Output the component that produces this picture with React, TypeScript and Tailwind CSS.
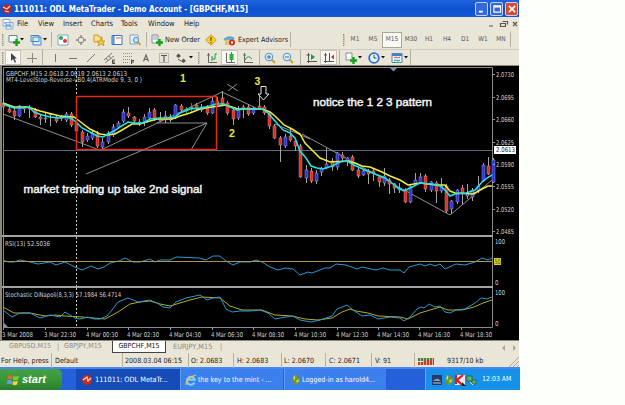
import type { ReactNode } from "react";
import clsx from "clsx";

type Candle = [color: "r" | "b" | "g", high: number, top: number, bottom: number, low: number];

const candles: Candle[] = [
  ["r", 98, 103, 107, 110], ["r", 107, 109, 112, 113], ["r", 108, 111, 116, 120], ["b", 105, 106, 116, 117],
  ["b", 106, 107, 109, 113], ["r", 105, 107, 109, 118], ["r", 108, 110, 117, 118], ["r", 114, 117, 119, 125],
  ["b", 112, 118, 119, 123], ["b", 113, 114, 115, 126], ["r", 115, 118, 121, 123], ["b", 115, 116, 118, 121],
  ["b", 112, 114, 120, 122], ["r", 112, 114, 125, 127], ["r", 121, 123, 131, 134], ["r", 130, 132, 142, 147],
  ["b", 133, 136, 140, 142], ["b", 130, 133, 138, 140], ["r", 131, 134, 146, 148], ["b", 138, 142, 147, 149],
  ["b", 131, 133, 142, 144], ["b", 124, 127, 134, 137], ["b", 121, 123, 127, 129], ["b", 109, 112, 121, 123],
  ["r", 107, 113, 116, 118], ["r", 116, 117, 121, 123], ["r", 119, 122, 124, 126], ["b", 114, 117, 122, 126],
  ["b", 108, 112, 118, 120], ["r", 108, 110, 119, 121], ["r", 112, 118, 121, 122], ["r", 111, 116, 120, 123],
  ["r", 114, 117, 120, 122], ["b", 104, 105, 118, 119], ["r", 104, 106, 110, 111], ["g", 107, 109, 110, 113],
  ["g", 103, 107, 108, 112], ["r", 103, 105, 109, 110], ["b", 104, 107, 110, 112], ["r", 105, 107, 113, 115],
  ["b", 96, 101, 113, 114], ["r", 97, 101, 103, 105], ["r", 91, 98, 104, 106], ["r", 101, 103, 113, 115],
  ["r", 107, 110, 119, 125], ["b", 106, 110, 118, 120], ["r", 105, 107, 109, 118], ["r", 104, 107, 114, 116],
  ["b", 107, 108, 113, 115], ["r", 96, 106, 109, 110], ["r", 105, 107, 113, 115], ["r", 112, 114, 126, 129],
  ["r", 124, 126, 138, 139], ["r", 136, 138, 145, 162], ["b", 134, 137, 146, 148], ["r", 128, 136, 140, 142],
  ["r", 138, 141, 146, 151], ["r", 144, 146, 177, 178], ["b", 165, 170, 178, 183], ["r", 168, 171, 181, 183],
  ["b", 170, 173, 181, 184], ["b", 167, 168, 172, 176], ["b", 148, 164, 168, 169], ["r", 158, 161, 167, 171],
  ["b", 152, 153, 167, 170], ["r", 152, 155, 158, 161], ["b", 157, 158, 161, 166], ["r", 155, 157, 170, 171],
  ["r", 168, 170, 176, 178], ["b", 169, 171, 175, 176], ["r", 169, 171, 174, 184], ["r", 169, 171, 173, 181],
  ["r", 175, 177, 182, 187], ["b", 168, 176, 183, 186], ["r", 178, 180, 184, 194], ["r", 183, 184, 188, 193],
  ["b", 183, 188, 190, 193], ["r", 188, 190, 202, 203], ["b", 185, 186, 202, 203], ["b", 173, 180, 184, 186],
  ["b", 173, 177, 183, 184], ["r", 174, 176, 189, 192], ["b", 181, 182, 190, 192], ["r", 181, 183, 191, 203],
  ["b", 178, 186, 191, 193], ["r", 184, 186, 211, 213], ["b", 200, 201, 209, 214], ["b", 189, 190, 202, 204],
  ["r", 185, 188, 193, 205], ["b", 184, 193, 196, 199], ["b", 188, 190, 197, 201], ["b", 176, 186, 191, 193],
  ["b", 163, 165, 181, 182], ["r", 157, 166, 174, 175], ["b", 158, 160, 182, 183],
];

const candleFill = { r: "#e8281c", b: "#2a30e8", g: "#18a030" };

const fastLine =
  "3,104 8,106 14,108 22,108 29,107 34,112 42,115 50,117 60,118 67,117 72,119 76,122 82,128 90,132 97,136 103,137 108,134 114,131 120,127 128,122 135,123 143,123 150,119 160,118 168,118 175,117 180,113 190,109 200,108 210,106 216,104 224,104 230,107 237,110 245,109 262,109 268,113 275,121 283,130 290,133 295,138 300,151 306,158 311,166 317,168 323,169 332,166 340,162 347,161 354,165 365,170 375,174 385,178 392,183 398,188 404,191 410,188 420,183 432,184 440,186 445,190 450,196 455,194 466,193 475,190 482,182 487,178 492,175";
const slowLine =
  "3,103 14,107 28,107 40,111 52,114 60,116 74,117 82,123 90,129 100,134 108,135 115,134 122,130 132,124 140,124 150,121 157,119 172,119 180,116 190,113 200,109 212,107 226,105 238,109 262,109 270,112 276,117 284,125 292,129 300,134 305,143 313,151 320,158 330,162 348,161 355,163 362,166 370,167 382,172 390,176 400,180 408,185 420,183 436,185 445,185 450,191 455,193 473,194 482,189 488,186 492,186";
const rsiLine =
  "3,260 8,262 14,262 20,260 30,262 38,264 50,262 56,265 65,262 75,267 82,270 91,266 98,269 104,267 110,263 119,261 125,258 133,262 140,262 150,259 155,262 160,260 170,260 176,257 200,258 206,260 213,256 220,256 226,261 233,265 240,262 250,262 256,260 262,262 270,267 278,270 285,268 293,269 300,275 308,272 312,273 325,268 330,268 336,264 346,265 357,269 362,267 376,270 383,268 390,270 400,270 404,273 409,267 420,264 425,266 430,264 435,266 440,264 445,269 456,264 465,265 475,262 482,258 488,260 492,258";
const stochMain =
  "3,310 12,317 20,313 30,313 40,318 50,315 60,317 65,312 75,318 80,319 88,317 94,319 100,319 107,316 112,310 118,302 128,298 138,302 150,300 157,303 163,307 170,308 176,302 186,298 200,295 207,300 213,298 220,297 226,309 232,312 240,311 250,311 260,310 268,313 275,319 285,317 293,316 300,320 311,322 320,320 332,316 337,309 347,305 353,310 362,316 370,315 378,319 390,317 400,318 404,321 410,317 417,309 421,307 424,308 429,304 435,307 440,306 445,312 450,313 456,310 465,309 475,303 481,298 487,299 492,297";
const stochSignal =
  "3,307 14,313 30,313 45,316 55,315 65,316 82,317 105,319 118,312 130,304 140,302 150,301 160,304 170,306 180,303 190,300 202,297 220,298 230,306 242,310 262,310 275,315 292,316 305,319 318,320 332,318 342,312 350,309 356,311 368,313 378,316 400,317 408,319 420,313 430,310 440,307 448,310 462,310 474,307 483,303 492,300";

const prices: [string, number][] = [
  ["2.0730", 77], ["2.0695", 100], ["2.0660", 122], ["2.0625", 145],
  ["2.0590", 167], ["2.0555", 189], ["2.0520", 212], ["2.0485", 234],
];

const times: [string, number, number][] = [
  ["3 Mar 2008", 2, 31], ["3 Mar 22:30", 44, 32], ["4 Mar 00:30", 86, 32], ["4 Mar 02:30", 127, 32],
  ["4 Mar 04:30", 169, 32], ["4 Mar 06:30", 211, 32], ["4 Mar 08:30", 252, 32], ["4 Mar 10:30", 294, 32],
  ["4 Mar 12:30", 336, 32], ["4 Mar 14:30", 377, 32], ["4 Mar 16:30", 418, 32], ["4 Mar 18:30", 460, 32],
];

// one chart pane, drawn in window coordinates
function Pane({ top, height, children }: { top: number; height: number; children: ReactNode }) {
  return (
    <svg
      width={517}
      height={height}
      viewBox={`2 ${top} 517 ${height}`}
      className="block shrink-0 font-['DejaVu_Sans_Condensed','DejaVu_Sans',sans-serif]"
    >
      {children}
    </svg>
  );
}

function Label({ x, y, w, children, fill = "#d4d4d4" }: { x: number; y: number; w: number; children: string; fill?: string }) {
  return (
    <text x={x} y={y} textLength={w} lengthAdjust="spacingAndGlyphs" fontSize={6.6} fill={fill}>
      {children}
    </text>
  );
}

function Note({ x, y, w, children }: { x: number; y: number; w: number; children: string }) {
  return (
    <text
      x={x} y={y} textLength={w} fontSize={11.5} fill="#f4f4f4" stroke="#f4f4f4" strokeWidth={0.45}
      lengthAdjust="spacingAndGlyphs" className="font-['Liberation_Sans',Arial,sans-serif]"
    >
      {children}
    </text>
  );
}

function PricePane() {
  return (
    <Pane top={66} height={169}>
      <path d="M3.5 235V67.5H492.5V235" fill="none" stroke="#8a8a8a" />
      <path d="M3 150.5H492" stroke="#566c84" />
      <path d="M76.5 68V235" stroke="#c8c8b8" strokeDasharray="2 2" />
      <path
        d="M3 114L97 149M103 149L222 92L258 109M275 124L310 139M302 134L417 197L450 215L492 180M86 174L207 123L191 150M157 123H207M227 84L238 91M228 91L237 84"
        stroke="#b4b0b0" strokeWidth={0.8} fill="none"
      />
      {candles.map(([color, high, top, bottom, low], i) => {
        const x = Math.round(3.4 + i * 5.21);
        return (
          <g key={i}>
            <path d={`M${x + 0.5} ${high}V${low}`} stroke={color === "g" ? "#18a030" : "#a8a4a4"} />
            <rect
              x={x - 1} y={top} width={3} height={Math.max(1, bottom - top)}
              fill={candleFill[color]} stroke="#b8a8b0" strokeWidth={0.45}
            />
          </g>
        );
      })}
      <polyline points={slowLine} fill="none" stroke="#f0ee38" strokeWidth={1.5} />
      <polyline points={fastLine} fill="none" stroke="#20e4e8" strokeWidth={1.5} />
      <rect x={76.5} y={96.5} width={140} height={53} fill="none" stroke="#e42a18" strokeWidth={1.5} />
      <path d="M261 86.5H266V94H269L263.5 100L258 94H261Z" fill="#000" stroke="#e8e8e8" />
      <path d="M390 68H397L393.5 71.5Z" fill="#7890a8" />
      <g fontSize={10.5} fontWeight={700} fill="#ece83c" className="font-['Liberation_Sans',Arial,sans-serif]">
        <text x={180} y={82}>1</text>
        <text x={229} y={137}>2</text>
        <text x={254.5} y={85}>3</text>
      </g>
      <Note x={313} y={105.5} w={119}>notice the 1 2 3 pattern</Note>
      <Note x={23.5} y={193} w={178.5}>market trending up take 2nd signal</Note>
      <Label x={6} y={75.5} w={121}>GBPCHF,M15  2.0618 2.0619 2.0613 2.0613</Label>
      <Label x={6} y={82} w={136}>MT4-LevelStop-Reverse-vB0.4(ATRMode 9, 3, 0 )</Label>
      {prices.map(([p, y]) => (
        <g key={p}>
          <path d={`M493 ${y - 2.5}H495`} stroke="#999" />
          <Label x={496} y={y} w={18}>{p}</Label>
        </g>
      ))}
      <rect x={494} y={146} width={22} height={8} fill="#fff" />
      <Label x={496} y={152.4} w={19} fill="#222">2.0613</Label>
    </Pane>
  );
}

function RsiPane() {
  return (
    <Pane top={237} height={49}>
      <path d="M3.5 237V286M492.5 237V286" stroke="#8a8a8a" />
      <path d="M76.5 237V286" stroke="#c8c8b8" strokeDasharray="2 2" />
      <polyline points={rsiLine} fill="none" stroke="#249cd0" />
      <path d="M4 261.5H492" stroke="#a89450" />
      <Label x={5} y={245.5} w={45}>RSI(13) 52.5036</Label>
      <Label x={495} y={243.5} w={10}>100</Label>
      <Label x={495} y={285} w={3.5}>0</Label>
      <rect x={494} y={258} width={7} height={7} fill="#d8d420" />
      <Label x={494.5} y={264} w={6} fill="#555010">50</Label>
    </Pane>
  );
}

function StochasticPane() {
  return (
    <Pane top={288} height={51}>
      <path d="M3.5 288V327.5H492.5V288" fill="none" stroke="#8a8a8a" />
      <path d="M76.5 288V327" stroke="#c8c8b8" strokeDasharray="2 2" />
      <polyline points={stochSignal} fill="none" stroke="#b4ac24" />
      <polyline points={stochMain} fill="none" stroke="#249cd0" />
      <path d="M4 323V327H8Z" fill="#8098b8" />
      <Label x={5} y={297} w={116}>Stochastic DiNapoli(8,3,3) 57.1984 56.4714</Label>
      <Label x={495} y={295} w={10}>100</Label>
      <Label x={495} y={326} w={3.5}>0</Label>
      {times.map(([t, x, w]) => (
        <g key={t}>
          <path d={`M${x + 1.5} 327V330`} stroke="#999" />
          <Label x={x} y={336.5} w={w}>{t}</Label>
        </g>
      ))}
    </Pane>
  );
}

function Icon({ children, className = "w-3" }: { children: ReactNode; className?: string }) {
  return (
    <span className={clsx("flex h-full shrink-0 items-center justify-center", className)}>
      <svg width={12} height={12} viewBox="0 0 12 12" fill="none" className="shrink-0">
        {children}
      </svg>
    </span>
  );
}

function Caret() {
  return (
    <svg width={4} height={3} viewBox="0 0 4 3" className="shrink-0">
      <path d="M0 0H4L2 2.5Z" fill="#111" />
    </svg>
  );
}

const Divider = () => <span className="h-[15px] w-px shrink-0 bg-[#b4b1a3]" />;
const Grip = () => <span className="h-3 w-[2px] shrink-0 border-l border-dotted border-[#99958a] bg-[#d0ccbd]" />;

const plus = <path d="M8.5 5V12M5 8.5H12" stroke="#16a020" strokeWidth={2.4} />;

function TitleBar() {
  return (
    <div className="flex h-[17px] w-[519px] shrink-0 items-center bg-gradient-to-b from-[#2164df] via-[#0c52cf] to-[#1458d8] pl-[1px] pr-[1px]">
      <Icon>
        <circle cx="6" cy="6" r="4.8" fill="#ad2920" />
        <path d="M2 4L6 6L9 3M4 8L8 9" stroke="#ffd4c6" strokeWidth="1.2" />
      </Icon>
      <svg width={400} height={17} className="ml-[1px] shrink-0 font-['DejaVu_Sans_Condensed','DejaVu_Sans',sans-serif]">
        <text x={0} y={12.3} textLength={234} lengthAdjust="spacingAndGlyphs" fontSize={8.6} fontWeight={700} fill="#fff">
          111011: ODL MetaTrader - Demo Account - [GBPCHF,M15]
        </text>
      </svg>
      <div className="ml-auto flex gap-[2px]">
        <WindowButton className="bg-[#3468dc]"><path d="M3 9H7" strokeWidth={2} /></WindowButton>
        <WindowButton className="bg-[#3468dc]"><path d="M3 3H10V9.5H3ZM3 4H10" /></WindowButton>
        <WindowButton className="bg-[#dc4830]"><path d="M3 3L9.5 9.5M9.5 3L3 9.5" strokeWidth={1.7} /></WindowButton>
      </div>
    </div>
  );
}

function WindowButton({ className, children }: { className: string; children: ReactNode }) {
  return (
    <span className={clsx("flex h-[14px] w-[13px] items-center justify-center rounded-[2px] border border-[#c4d4f4]", className)}>
      <svg width={12} height={12} viewBox="0 0 12.5 12.5" fill="none" stroke="#fff" strokeWidth={1.2} className="shrink-0">
        {children}
      </svg>
    </span>
  );
}

function MenuBar() {
  return (
    <div className="flex h-[13px] shrink-0 items-center pl-[2px] text-[7.5px] text-[#222]">
      <Icon className="w-[15px] pr-[3px]">
        <path d="M1 1.5H8V8H1ZM4 4.5H11V11H4Z" fill="#f4faff" stroke="#84a8d8" />
        <path d="M3 4V6M5 6V9M7 6V9M9 7V10" stroke="#5888c8" />
      </Icon>
      <span className="w-[21px]">File</span>
      <span className="w-[25px]">View</span>
      <span className="w-[28px]">Insert</span>
      <span className="w-[30px]">Charts</span>
      <span className="w-[27px]">Tools</span>
      <span className="w-[36px]">Window</span>
      <span>Help</span>
      <svg width={32} height={11} viewBox="0 0 32 11" fill="none" stroke="#555" className="ml-auto">
        <path d="M2 8H6M15.5 3.5H20.5V6.5M13.5 5.5H18.5V8.5H13.5ZM26 4L30 8M30 4L26 8" strokeWidth={1.2} />
      </svg>
    </div>
  );
}

const periods = ["M1", "M5", "M15", "M30", "H1", "H4", "D1", "W1", "MN"];

function StandardToolbar() {
  return (
    <div className="flex h-[19px] shrink-0 items-center pl-[2px] text-[7.5px] text-[#222]">
      <Grip />
      <Icon className="ml-[3px] w-[13px]">
        <path d="M1 1.5H9V8H1Z" fill="#f4fff4" stroke="#6484a0" />{plus}
      </Icon>
      <Caret />
      <Icon className="ml-[6px] w-[12px]">
        <path d="M3 3H11V11H3ZM1 1.5H9V7.5H1Z" fill="#d8ecfc" stroke="#4886c8" />
      </Icon>
      <span className="ml-[1px] flex w-[8px]"><Caret /></span>
      <Divider />
      <Icon className="ml-[5px]">
        <path d="M1 1H11V11H1Z" fill="#fff" stroke="#80a4c8" />
        <circle cx="4" cy="4" r="2" fill="#20ac40" /><circle cx="8" cy="7" r="2" fill="#e03828" />
      </Icon>
      <Icon className="ml-[6px]">
        <circle cx="6" cy="6" r="3" stroke="#888" />
        <path d="M6 1V4M6 8V11M1 6H4M8 6H11" stroke="#888" strokeWidth={1.4} />
      </Icon>
      <Icon className="ml-[6px]">
        <path d="M1 1H5L6 3H9V8H1Z" fill="#ffe488" stroke="#c89430" />
        <path d="M8 4L9 7L12 7L10 9L11 12L8 10L5 12L6 9L4 7L7 7Z" fill="#f8c438" stroke="#b48418" strokeWidth={0.6} />
      </Icon>
      <Icon className="ml-[6px]">
        <path d="M1 1.5H11V10.5H1Z" fill="#fff" stroke="#3078c4" />
        <path d="M2 2V10M3 2V10" stroke="#3078c4" /><path d="M5 4H10" stroke="#e05838" />
      </Icon>
      <Icon className="ml-[6px]">
        <path d="M1 1H9V10H1Z" fill="#e4f0fc" stroke="#80a4c8" />
        <circle cx="7" cy="6" r="2.6" fill="#c8e4fc" stroke="#6488ac" /><path d="M9 8L11.5 11" stroke="#d09820" strokeWidth={1.8} />
      </Icon>
      <span className="w-[5px]" />
      <Divider />
      <Icon className="ml-[4px]">
        <path d="M1 1H7V9H1Z" fill="#fff" stroke="#7c8c98" /><path d="M2 3H6M2 5H6" stroke="#8ca0b0" />{plus}
      </Icon>
      <span className="ml-[2px] w-[40px] whitespace-nowrap text-[7.3px]">New Order</span>
      <Icon>
        <path d="M6 .7L11.3 6L6 11.3L.7 6Z" fill="#f8d02c" stroke="#c89820" />
        <path d="M6 3V7M6 8V9.2" stroke="#7c5400" strokeWidth={1.3} />
      </Icon>
      <Icon className="ml-[5px] w-[13px]">
        <path d="M1 5Q6 1 11 4L9 8H3Z" fill="#60b0d8" stroke="#4488a8" strokeWidth={0.6} />
        <path d="M2 6H8V11H2Z" fill="#e8c468" /><circle cx="9" cy="8.5" r="3" fill="#d82c20" /><path d="M8 7.5H10V9.5H8Z" fill="#fff" />
      </Icon>
      <span className="ml-[3px] w-[52px] whitespace-nowrap text-[7.1px]">Expert Advisors</span>
      <Divider />
      <span className="w-[52px]" />
      <Grip />
      <div className="ml-[1px] flex h-[17px] w-[164px] items-center text-[6.5px] text-[#555]">
        {periods.map((p) => (
          <span
            key={p}
            className={clsx(
              "flex h-[16px] flex-1 items-center justify-center",
              p === "M15" && "border border-[#aaa79a] bg-[#faf9f4]",
            )}
          >
            {p}
          </span>
        ))}
      </div>
      <Divider />
    </div>
  );
}

function LineToolbar() {
  return (
    <div className="flex h-[16px] shrink-0 items-center border-t border-[#d0ccbd] pl-[2px]">
      <Grip />
      <Icon className="ml-[1px] w-[16px] border border-[#c8c5b8] bg-[#faf9f4]">
        <path d="M4 1V9L6 7L8 11L9 10L7.5 6.5H10Z" fill="#444" />
      </Icon>
      <Icon className="w-[21px]"><path d="M6.5 1V11M1 6.5H11" stroke="#888" /></Icon>
      <Divider />
      <Icon className="ml-[3px] w-[18px]"><path d="M6.5 2V10" stroke="#777" /></Icon>
      <Icon className="w-[18px]"><path d="M2 6.5H10" stroke="#777" /></Icon>
      <Icon className="w-[18px]"><path d="M2 10L10 2" stroke="#777" /></Icon>
      <Icon className="w-[18px]">
        <path d="M1 8L9 1M2 11L11 4M3 6L5 9M6 4L8 7" stroke="#777" /><path d="M12 8H9.5V11.5H12M9.5 10H12" stroke="#444" />
      </Icon>
      <Icon className="w-[19px]">
        <path d="M1 1.5H11M1 4.5H11M1 7.5H11M1 10.5H7" stroke="#888" strokeDasharray="1 1" /><path d="M9.5 12V8.5H12M9.5 10H12" stroke="#444" />
      </Icon>
      <Icon className="w-[18px]"><path d="M3.5 9.5L6 3L8.5 9.5M4.5 7.5H7.5" stroke="#666" strokeWidth={1.2} /></Icon>
      <Icon className="w-[18px]">
        <path d="M1.5 1.5H10.5V10.5H1.5Z" stroke="#888" strokeDasharray="1 1" /><path d="M3 3.5H9M6 3.5V10" stroke="#555" strokeWidth={1.2} />
      </Icon>
      <Icon className="w-[16px]">
        <path d="M1 4L3.5 1.5L6 4L3.5 6ZM6 9L8.5 6.5L11 9L8.5 11Z" fill="#555" /><path d="M3 7L6 9" stroke="#555" />
      </Icon>
      <span className="flex w-[9px]"><Caret /></span>
      <Grip />
      <Icon className="ml-[2px] w-[19px]">
        <path d="M2.5 1V10.5H11M1 3H4" stroke="#666" /><path d="M6 4V9M6 7H9V2H11" stroke="#18a030" />
      </Icon>
      <Icon className="w-[17px] border border-[#c8c5b8] bg-[#faf9f4]">
        <path d="M2.5 1V10.5H11" stroke="#666" /><path d="M7.5 0V10" stroke="#18a030" /><path d="M5.5 2H9.5V8H5.5Z" fill="#20b438" />
      </Icon>
      <Icon className="w-[19px]">
        <path d="M2.5 1V10.5H11M1 3H4" stroke="#666" /><path d="M3 8Q6 2 10 7" stroke="#18a030" />
      </Icon>
      <span className="w-[2px]" />
      <Divider />
      <Icon className="w-[19px]">
        <path d="M7 7L11 11" stroke="#cca030" strokeWidth={2} /><circle cx="5" cy="5" r="3.8" fill="#dceefc" stroke="#4c90cc" /><path d="M3 5H7M5 3V7" stroke="#286cac" />
      </Icon>
      <Icon className="w-[18px]">
        <path d="M7 7L11 11" stroke="#cca030" strokeWidth={2} /><circle cx="5" cy="5" r="3.8" fill="#dceefc" stroke="#4c90cc" /><path d="M3 5H7" stroke="#286cac" />
      </Icon>
      <span className="w-[3px]" />
      <Divider />
      <Icon className="ml-[1px] w-[18px]">
        <path d="M3.5 1V11M1.5 3H5M2 9.5H12" stroke="#555" /><path d="M6 2L10 5L6 8Z" fill="#18a030" />
      </Icon>
      <Icon className="w-[17px] border border-[#c8c5b8] bg-[#faf9f4]">
        <path d="M2.5 1V11M1 3H4M1 9.5H11M6.5 1V9" stroke="#555" /><path d="M8 5L11 2.5V7.5Z" fill="#d83020" />
      </Icon>
      <span className="w-[2px]" />
      <Divider />
      <Icon className="ml-[4px] w-[14px]">
        <path d="M1 1H7V8H1Z" fill="#fff" stroke="#7c8c98" />{plus}
      </Icon>
      <Caret />
      <Icon className="ml-[5px] w-[14px]">
        <circle cx="6" cy="6" r="4.8" fill="#e8f4ff" stroke="#2870cc" strokeWidth={1.8} /><path d="M6 3V6H8.5" stroke="#444" />
      </Icon>
      <Caret />
      <Icon className="ml-[5px] w-[14px]">
        <path d="M1 1.5H11V10.5H1Z" fill="#e8f4ff" stroke="#5084bc" /><path d="M1 3H11" stroke="#4080d0" strokeWidth={2} />
        <path d="M3 6L5 5L7 6L9 5" stroke="#d84830" /><path d="M3 9L5 8L7 9L9 8" stroke="#18a030" />
      </Icon>
      <span className="flex w-[6px]"><Caret /></span>
      <Divider />
    </div>
  );
}

function ChartTabs() {
  return (
    <div className="flex h-[14px] shrink-0 items-start border-t border-[#8c897c] text-[7.3px] text-[#8c897e]">
      <span className="ml-[9px] w-[48px] pt-[2px] text-[7px]">GBPUSD,M15</span>
      <span className="w-[7px] pt-[2px]">|</span>
      <span className="w-[48px] pt-[2px] text-[7px]">GBPJPY,M15</span>
      <span className="flex h-[12px] w-[54px] items-center justify-center border border-t-0 border-[#444] bg-white text-[7px] text-[#111]">GBPCHF,M15</span>
      <span className="ml-[7px] w-[47px] pt-[2px] text-[7.3px]">EURJPY,M15</span>
      <span className="pt-[2px]">|</span>
      <svg width={16} height={8} viewBox="0 0 16 8" fill="#aaa799" className="mr-[1px] mt-[3px] ml-auto">
        <path d="M3 1V7L0 4ZM11 1V7L14 4Z" />
      </svg>
    </div>
  );
}

function StatusBar() {
  return (
    <div className="flex h-[13px] shrink-0 items-center whitespace-nowrap text-[7.1px] text-[#222]">
      <span className="w-[51px] pl-[1px]">For Help, press</span>
      <Divider />
      <span className="w-[70px] pl-[3px]">Default</span>
      <Divider />
      <span className="w-[65px] pl-[2px]">2008.03.04 06:15</span>
      <Divider />
      <span className="w-[44px] pl-[2px]">O: 2.0683</span>
      <Divider />
      <span className="w-[47px] pl-[3px]">H: 2.0683</span>
      <Divider />
      <span className="w-[43px] pl-[2px]">L: 2.0670</span>
      <Divider />
      <span className="w-[45px] pl-[3px]">C: 2.0671</span>
      <Divider />
      <span className="w-[42px] pl-[3px]">V: 91</span>
      <Divider />
      <svg width={16} height={8} viewBox="0 0 16 8" className="ml-[3px] mr-[13px] shrink-0">
        <path d="M0 1H16V4H0Z" fill="#48843c" /><path d="M0 8V5H5V4H9V3H13V1H16V8Z" fill="#c83c30" />
        <path d="M2.5 0V8M5.5 0V8M8.5 0V8M11.5 0V8M14.5 0V8" stroke="#e8dcc8" strokeWidth={0.7} />
      </svg>
      <span>9317/10 kb</span>
      <svg width={10} height={12} viewBox="0 0 10 12" stroke="#aaa799" className="ml-auto">
        <path d="M0 12L10 2M4 12L10 6M8 12L10 10" />
      </svg>
    </div>
  );
}

const Parrot = () => (
  <>
    <path d="M5 1L9 3L10 7L7 11L3 10L2 5Z" fill="#58a838" />
    <path d="M5 1L3 4L5 6ZM6 7L9 5L8 9Z" fill="#f4d060" /><path d="M3 7L5 8L4 10ZM7 2L9 3L8 5Z" fill="#d84030" />
  </>
);

function Taskbar() {
  return (
    <div className="flex h-[23px] w-[520px] shrink-0 items-stretch border-t-2 border-[#4888f0] bg-[#2460d8] text-[7.1px] text-white">
      <div className="flex w-[62px] items-center rounded-r-[5px] bg-gradient-to-b from-[#48a048] via-[#389838] to-[#2c7c2c] pl-[7px]">
        <svg width={12} height={12} viewBox="0 0 12 12" className="shrink-0">
          <path d="M1 2Q3 .5 5.5 2L5 5.5Q3 4.3 .5 5.7Z" fill="#f06030" />
          <path d="M6.5 2Q9 3.3 12 1.8L11 5.5Q8.5 7 6 5.7Z" fill="#80cc38" />
          <path d="M.4 6.7Q3 5.3 5 6.7L4.3 10.4Q2 9.2 0 10.6Z" fill="#58a0f8" />
          <path d="M6 6.9Q8 8 11 6.7L10 10.6Q8 12 5.3 10.6Z" fill="#f8d040" />
        </svg>
        <span className="ml-[3px] font-['Liberation_Sans',sans-serif] text-[11px] font-bold italic leading-none">start</span>
      </div>
      <div className="ml-[14px] flex w-[104px] items-center whitespace-nowrap bg-[#164cb8] pl-[5px]">
        <Icon>
          <circle cx="6" cy="6" r="5" fill="#c82c20" /><path d="M2 6L6 3L7 7L10 4" stroke="#ffd4c6" strokeWidth="1.3" />
        </Icon>
        <span className="ml-[2px] text-[7.3px]">111011: ODL MetaTr...</span>
      </div>
      <div className="flex w-[103px] items-center whitespace-nowrap border-l border-[#609cf8] bg-[#3c80ee] pl-[4px]">
        <Icon>
          <path d="M9.5 8.5A4 4 0 1 1 9.8 5.8H3.5" stroke="#80d0fc" strokeWidth={2} />
          <path d="M1 11Q1 4 11 1" stroke="#f0c840" strokeWidth={1.1} />
        </Icon>
        <span className="ml-[1px]">the key to the mint - ...</span>
      </div>
      <div className="ml-[1px] flex w-[102px] items-center whitespace-nowrap border-l border-[#609cf8] bg-[#3c80ee] pl-[5px]">
        <Icon><Parrot /></Icon>
        <span>Logged-in as harold4...</span>
      </div>
      <div className="ml-auto flex w-[95px] items-center border-l border-[#40b8f8] bg-[#1690e8] pl-[5px]">
        <Icon>
          <path d="M1 1H11V11H1Z" fill="#283868" /><path d="M2 7Q6 2 10 7" fill="#8098c0" /><path d="M2 9H10" stroke="#b8c8e0" />
        </Icon>
        <Icon><Parrot /></Icon>
        <Icon className="w-[10px]">
          <path d="M1 1H11V11H1Z" fill="#f0e8e8" /><path d="M2 1V10M9 1L3 6L8 11" stroke="#d81c18" strokeWidth={2.2} />
          <path d="M8 8L12 12H8Z" fill="#222" />
        </Icon>
        <Icon className="w-[13px]">
          <path d="M1 2H6V7H1ZM6 6H10V10H6Z" fill="#60b850" stroke="#2c5440" strokeWidth={0.7} /><path d="M4 8L7 11" stroke="#dde8dd" />
        </Icon>
        <span className="ml-[4px] whitespace-nowrap text-[6.9px]">12:03 AM</span>
      </div>
    </div>
  );
}

export default function App() {
  return (
    <div className="h-[405px] w-[625px] overflow-hidden bg-[#fcfffa] font-['DejaVu_Sans_Condensed','DejaVu_Sans',sans-serif] leading-none">
      <div className="flex h-[367px] w-[519px] flex-col bg-[#e9e6d8]">
        <TitleBar />
        <MenuBar />
        <StandardToolbar />
        <LineToolbar />
        <div className="flex h-[275px] shrink-0 flex-col border-t border-l-2 border-[#8c897c] bg-black">
          <PricePane />
          <div className="h-[2px] w-[491px] shrink-0 bg-[#a4a4a4]" />
          <RsiPane />
          <div className="h-[2px] w-[491px] shrink-0 bg-[#a4a4a4]" />
          <StochasticPane />
        </div>
        <ChartTabs />
        <StatusBar />
      </div>
      <Taskbar />
    </div>
  );
}
